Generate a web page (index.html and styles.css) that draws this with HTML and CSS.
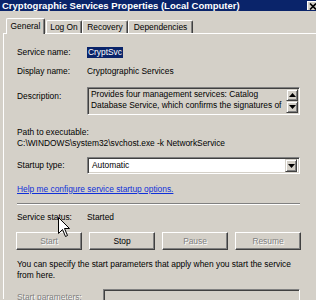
FILE: index.html
```html
<!DOCTYPE html>
<html lang="en">
<head>
    <meta charset="UTF-8">
    <title>Cryptographic Services Properties (Local Computer)</title>
    <link rel="stylesheet" href="styles.css">
</head>
<body>
    <div class="window">
        <div class="title-bar">
            <span class="title-text">Cryptographic Services Properties (Local Computer)</span>
            <span class="close-btn">
                <svg width="8" height="7" viewBox="0 0 8 7"><path d="M1 0.5 L7 6.5 M7 0.5 L1 6.5" stroke="#000" stroke-width="1.6"/></svg>
            </span>
        </div>

        <div class="tabs">
            <div class="tab active">General</div>
            <div class="tab tab-logon">Log On</div>
            <div class="tab tab-recovery">Recovery</div>
            <div class="tab tab-deps">Dependencies</div>
        </div>

        <div class="panel">
            <div class="row row-name">
                <span class="label">Service name:</span>
                <span class="selected">CryptSvc</span>
            </div>

            <div class="row row-display">
                <span class="label">Display name:</span>
                <span>Cryptographic Services</span>
            </div>

            <div class="row row-desc">
                <span class="label label-top">Description:</span>
                <div class="sunken desc-box">
                    <div class="desc-text">Provides four management services: Catalog<br>Database Service, which confirms the signatures of</div>
                    <div class="scrollbar">
                        <div class="raised scroll-btn">
                            <svg width="7" height="4" viewBox="0 0 7 4"><path d="M3.5 0 L7 4 L0 4 Z" fill="#000"/></svg>
                        </div>
                        <div class="raised scroll-btn">
                            <svg width="7" height="4" viewBox="0 0 7 4"><path d="M0 0 L7 0 L3.5 4 Z" fill="#000"/></svg>
                        </div>
                    </div>
                </div>
            </div>

            <div class="path-label">Path to executable:</div>
            <div class="path-value">C:\WINDOWS\system32\svchost.exe -k NetworkService</div>

            <div class="row row-startup">
                <span class="label">Startup type:</span>
                <div class="sunken combo">
                    <span class="combo-text">Automatic</span>
                    <div class="raised combo-btn">
                        <svg width="7" height="4" viewBox="0 0 7 4"><path d="M0 0 L7 0 L3.5 4 Z" fill="#000"/></svg>
                    </div>
                </div>
            </div>

            <div class="help-link">Help me configure service startup options.</div>

            <div class="separator"></div>

            <div class="row row-status">
                <span class="label">Service status:</span>
                <span>Started</span>
            </div>

            <div class="button-row">
                <button class="win-btn" disabled>Start</button>
                <button class="win-btn">Stop</button>
                <button class="win-btn" disabled>Pause</button>
                <button class="win-btn" disabled>Resume</button>
            </div>

            <p class="hint">You can specify the start parameters that apply when you start the service from here.</p>

            <div class="row row-params">
                <span class="label label-wide disabled-text">Start parameters:</span>
                <div class="sunken params-box"></div>
            </div>
        </div>

        <svg class="cursor" width="13" height="21" viewBox="0 0 13 21">
            <path d="M0.5 0.5 L0.5 16.5 L4.5 12.5 L7.5 19.5 L9.5 18.5 L6.5 11.5 L11.5 11.5 Z" fill="#fff" stroke="#000" stroke-width="1"/>
        </svg>
    </div>
</body>
</html>
```

FILE: styles.css
```css
* {
    margin: 0;
    padding: 0;
    box-sizing: border-box;
}

html, body {
    overflow: hidden;
}

body {
    background: #d4d0c8;
    font-family: "Liberation Sans", Arial, sans-serif;
    font-size: 8.4px;
    line-height: 11px;
    color: #000;
}

.window {
    position: relative;
    width: 320px;
    height: 300px;
}

/* title bar */
.title-bar {
    display: flex;
    align-items: center;
    height: 11px;
    padding-left: 2px;
    background: #0a246a;
    color: #fff;
}

.title-text {
    font-weight: bold;
    font-size: 9.5px;
}

.close-btn {
    display: flex;
    align-items: center;
    justify-content: center;
    width: 10px;
    height: 9px;
    margin-left: auto;
    margin-right: 3px;
    background: #d4d0c8;
    border-top: 1px solid #fff;
    border-left: 1px solid #fff;
}

/* tabs */
.tabs {
    display: flex;
    align-items: flex-end;
    height: 15px;
    margin-top: 7px;
    padding-left: 6px;
    position: relative;
    z-index: 2;
}

.tab {
    height: 13px;
    text-align: center;
    border-top: 1px solid #fff;
    border-left: 1px solid #fff;
    border-right: 1px solid #404040;
    border-radius: 2px 2px 0 0;
    box-shadow: inset -1px 0 #808080;
    line-height: 12px;
}

.tab.active {
    width: 39px;
    height: 16px;
    margin-bottom: -1px;
    background: #d4d0c8;
    line-height: 14px;
}

.tab-logon { width: 36px; margin-left: 1px; }
.tab-recovery { width: 46px; }
.tab-deps { width: 65px; }

/* panel */
.panel {
    margin-left: 3px;
    padding-left: 13px;
    border-top: 1px solid #fff;
    border-left: 1px solid #fff;
    height: 266px;
}

.row {
    display: flex;
    align-items: center;
}

.label {
    width: 70px;
    flex-shrink: 0;
}

.label-wide {
    width: 86px;
}

.label-top {
    align-self: flex-start;
    padding-top: 4px;
}

.row-name { margin-top: 13px; }
.row-display { margin-top: 8px; }
.row-desc { margin-top: 10px; }
.row-startup { margin-top: 8px; }
.row-status { margin-top: 7px; }
.row-params { margin-top: 8px; }

.selected {
    background: #0a246a;
    color: #fff;
    padding: 0 1px;
}

/* 3d borders */
.sunken {
    border: 1px solid;
    border-color: #808080 #fff #fff #808080;
    box-shadow: inset 1px 1px #404040, inset -1px -1px #d4d0c8;
}

.raised {
    border: 1px solid;
    border-color: #d4d0c8 #404040 #404040 #d4d0c8;
    box-shadow: inset 1px 1px #fff, inset -1px -1px #808080;
    background: #d4d0c8;
    display: flex;
    align-items: center;
    justify-content: center;
}

.desc-box {
    display: flex;
    width: 213px;
    height: 28px;
    padding: 1px;
}

.desc-text {
    flex: 1;
    height: 22px;
    white-space: nowrap;
    padding-left: 2px;
}

.scrollbar {
    width: 12px;
    display: flex;
    flex-direction: column;
}

.scroll-btn {
    height: 12px;
}

.path-label { margin-top: 12px; }

.combo {
    display: flex;
    align-items: center;
    width: 213px;
    height: 17px;
    padding: 2px;
    background: #fff;
}

.combo-text {
    flex: 1;
    padding-left: 2px;
}

.combo-btn {
    width: 12px;
    height: 13px;
}

.help-link {
    margin-top: 10px;
    color: #1030d8;
    text-decoration: underline;
}

.separator {
    width: 283px;
    height: 2px;
    margin-top: 8px;
    border-top: 1px solid #808080;
    border-bottom: 1px solid #fff;
}

.button-row {
    display: flex;
    gap: 7px;
    margin-top: 9px;
    margin-left: -1px;
}

.win-btn {
    width: 66px;
    height: 18px;
    font: inherit;
    color: #000;
    background: #d4d0c8;
    border: 1px solid;
    border-color: #fff #404040 #404040 #fff;
    box-shadow: inset -1px -1px #808080;
}

.win-btn:disabled,
.disabled-text {
    color: #808080;
    text-shadow: 1px 1px 0 #fff;
}

.hint {
    width: 285px;
    margin-top: 9px;
}

.params-box {
    width: 197px;
    height: 17px;
}

.cursor {
    position: absolute;
    left: 58px;
    top: 217px;
}
```
